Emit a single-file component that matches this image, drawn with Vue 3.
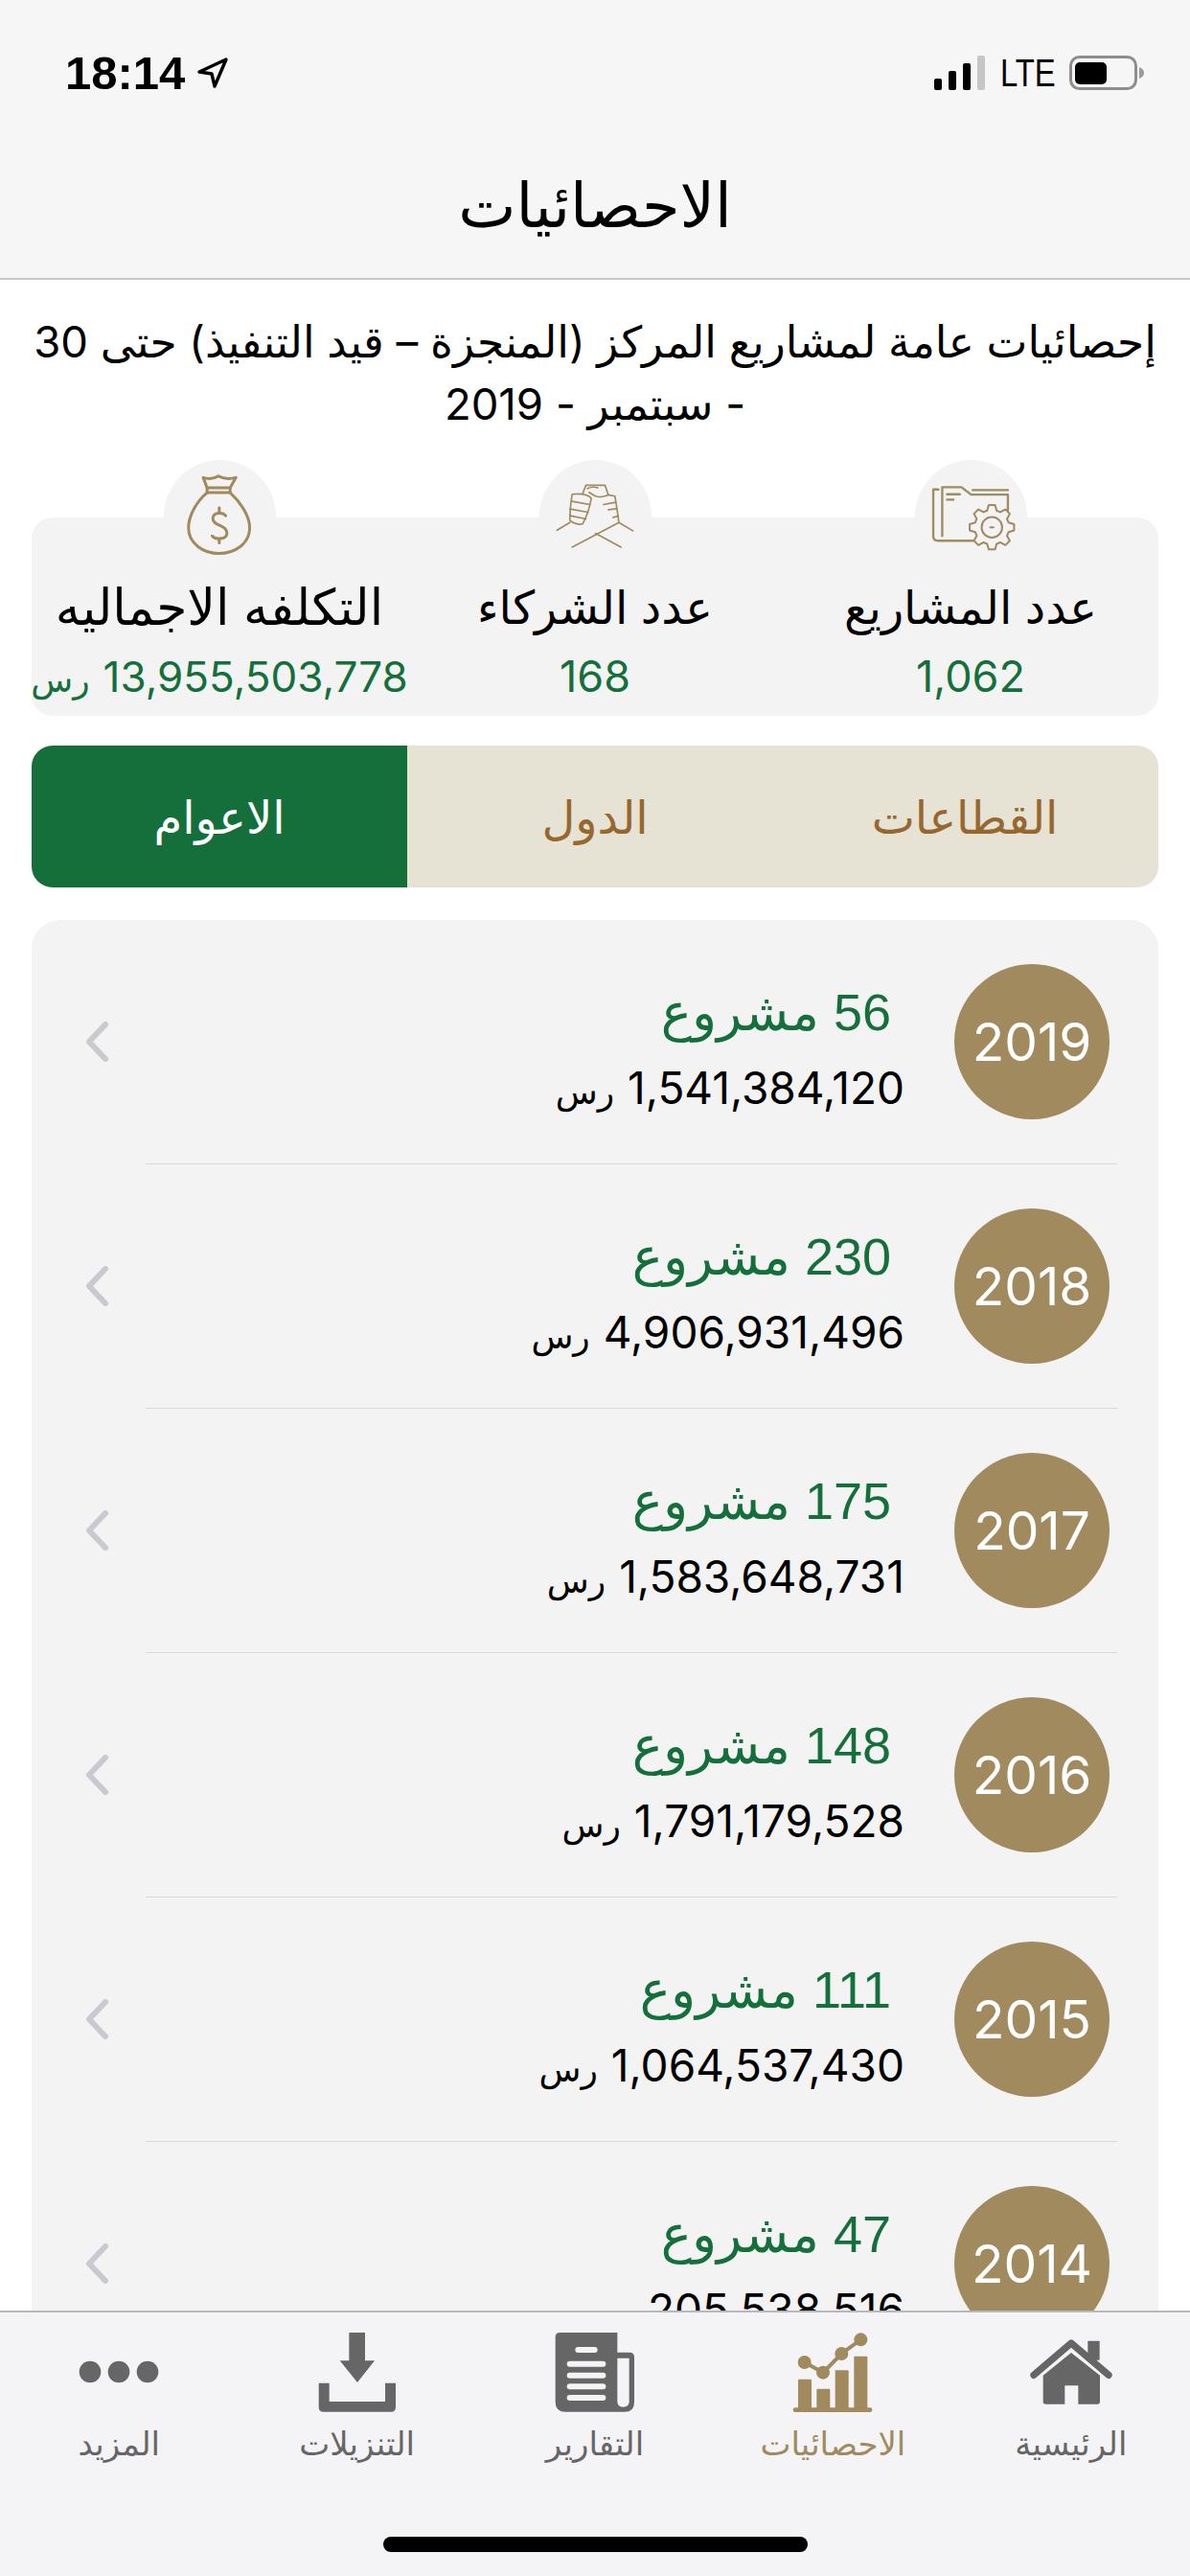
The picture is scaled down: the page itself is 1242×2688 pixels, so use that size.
<script setup>
const gearPath = (() => {
  const cx = 405, cy = 243, teeth = 8, ro = 70, ri = 54
  let d = ''
  for (let i = 0; i < teeth; i++) {
    const a = (i * 2 * Math.PI) / teeth - Math.PI / 2
    const w = 0.2
    const step = Math.PI / teeth
    const pts = [
      [ri, a - step + 0.08],
      [ri, a - w - 0.08],
      [ro, a - w + 0.06],
      [ro, a + w - 0.06],
      [ri, a + w + 0.08]
    ]
    pts.forEach(([r, t], j) => {
      const x = (cx + r * Math.cos(t)).toFixed(1)
      const y = (cy + r * Math.sin(t)).toFixed(1)
      d += `${i === 0 && j === 0 ? 'M' : 'L'}${x},${y} `
    })
  }
  return d + 'Z'
})()

const stats = [
  { key: 'projects', label: 'عدد المشاريع', value: '1,062', box: '165 33 350 350' },
  { key: 'partners', label: 'عدد الشركاء', value: '168', box: '70 33 350 350' },
  { key: 'cost', label: 'التكلفه الاجماليه', value: '13,955,503,778', unit: 'رس', box: '65 33 350 350' }
]

const segments = [
  { label: 'القطاعات', active: false },
  { label: 'الدول', active: false },
  { label: 'الاعوام', active: true }
]

const years = [
  { year: 2019, count: '56 مشروع', total: '1,541,384,120' },
  { year: 2018, count: '230 مشروع', total: '4,906,931,496' },
  { year: 2017, count: '175 مشروع', total: '1,583,648,731' },
  { year: 2016, count: '148 مشروع', total: '1,791,179,528' },
  { year: 2015, count: '111 مشروع', total: '1,064,537,430' },
  { year: 2014, count: '47 مشروع', total: '205,538,516' }
]

const tabs = [
  { key: 'home', label: 'الرئيسية', box: '866 60 288 270' },
  { key: 'stats', label: 'الاحصائيات', box: '124 60 288 270', active: true },
  { key: 'reports', label: 'التقارير', box: '846 60 288 270' },
  { key: 'downloads', label: 'التنزيلات', box: '104 60 288 270' },
  { key: 'more', label: 'المزيد', box: '-144 60 288 270' }
]
</script>

<template>
  <div class="phone">
    <header class="top">
      <div class="status">
        <div class="status-left">
          <span class="clock">18:14</span>
          <svg class="arrow" viewBox="0 0 34 34">
            <path d="M31 3 L3 16 L16 18 L19 31 Z" fill="none" stroke="#000" stroke-width="3.4" stroke-linejoin="round" />
          </svg>
        </div>
        <div class="status-right">
          <svg class="signal" viewBox="0 0 55 36">
            <rect x="0" y="24" width="8" height="12" rx="2" fill="#000" />
            <rect x="15" y="16" width="8" height="20" rx="2" fill="#000" />
            <rect x="30" y="8" width="8" height="28" rx="2" fill="#000" />
            <rect x="45" y="0" width="8" height="36" rx="2" fill="#c6c6c6" />
          </svg>
          <span class="lte">LTE</span>
          <svg class="battery" viewBox="0 0 78 36">
            <rect x="1.5" y="1.5" width="68" height="33" rx="9" fill="none" stroke="#8e8e8e" stroke-width="3" />
            <rect x="6" y="7" width="33" height="23" rx="5" fill="#000" />
            <path d="M73 12 Q78 14 78 18 Q78 22 73 24 Z" fill="#9a9a9a" />
          </svg>
        </div>
      </div>
      <h1 class="title">الاحصائيات</h1>
    </header>

    <main class="content">
      <p class="intro">إحصائيات عامة لمشاريع المركز (المنجزة – قيد التنفيذ) حتى 30 - سبتمبر - 2019</p>

      <section class="stats">
        <div v-for="s in stats" :key="s.key" class="stat" :class="'stat-' + s.key">
          <div class="bump">
            <svg class="bump-icon" :viewBox="s.box" fill="none" stroke="#a08a5e" stroke-linecap="round" stroke-linejoin="round">
              <g v-if="s.key === 'projects'" stroke-width="7">
                <path d="M238,125 H222 V270 Q222,285 237,285 H345" />
                <path d="M250,270 V118 H310 L340,141 H455 V190" />
                <path d="M345,127 H455" />
                <path d="M265,140 H305 M265,157 H285" />
                <path :d="gearPath" stroke-width="6" />
                <circle cx="405" cy="243" r="32" stroke-width="6" />
                <path d="M400,243 H410" stroke-width="6" />
              </g>
              <g v-else-if="s.key === 'partners'" stroke-width="5">
                <path d="M172,140 Q165,185 165,222 Q185,238 205,232 Q225,195 232,152 Q215,135 172,140 Z" />
                <path d="M172,162 L227,172 M165,186 L222,196 M166,207 L215,217" />
                <path d="M205,138 L215,112 H275 L285,142 Q262,152 245,146 L225,134" />
                <path d="M220,122 Q235,114 252,120" />
                <path d="M285,142 L306,146 L312,185 L318,228" />
                <path d="M270,172 L308,165 M285,188 L312,185 M300,212 L316,208" />
                <path d="M165,228 L125,252 M318,228 L362,254 M318,228 L172,305 M245,262 L325,305" />
              </g>
              <g v-else stroke-width="9">
                <path d="M188,88 Q215,96 235,83 Q258,96 290,88 L272,120 H200 Z" />
                <path d="M200,120 V135 H272 V120" />
                <path d="M200,135 C170,160 142,205 142,245 C142,295 190,325 237,325 C285,325 333,295 333,245 C333,205 300,160 272,135" />
                <path d="M258,207 C250,195 218,195 218,216 C218,240 262,234 262,262 C262,282 225,282 216,270" />
                <path d="M238,182 V196 M238,280 V292" />
              </g>
            </svg>
          </div>
          <div class="stat-label">{{ s.label }}</div>
          <div class="stat-value">
            <span>{{ s.value }}</span>
            <span v-if="s.unit" class="cur">{{ s.unit }}</span>
          </div>
        </div>
      </section>

      <nav class="segments">
        <div v-for="seg in segments" :key="seg.label" class="segment" :class="{ on: seg.active }">{{ seg.label }}</div>
      </nav>

      <section class="years">
        <article v-for="y in years" :key="y.year" class="year-row">
          <div class="year-body">
            <div class="year-badge">{{ y.year }}</div>
            <div class="year-text">
              <div class="year-count">{{ y.count }}</div>
              <div class="year-total">
                <span>{{ y.total }}</span>
                <span class="cur">رس</span>
              </div>
            </div>
            <svg class="chev" viewBox="0 0 26 42">
              <path d="M22 3 L5 21 L22 39" fill="none" stroke="#c9c9cf" stroke-width="6" stroke-linecap="round" stroke-linejoin="round" />
            </svg>
          </div>
          <div class="rule"></div>
        </article>
      </section>
    </main>

    <footer class="tabbar">
      <div class="tabs">
        <div v-for="t in tabs" :key="t.key" class="tab" :class="{ on: t.active }">
          <svg class="tab-icon" :viewBox="t.box">
            <g v-if="t.key === 'home'" fill="#666">
              <rect x="1062" y="98" width="37" height="60" rx="2" />
              <path d="M893,205 L1010,105 L1127,205" fill="none" stroke="#666" stroke-width="22" stroke-linecap="round" stroke-linejoin="round" />
              <path d="M922,206 L1010,135 L1100,206 V288 Q1100,296 1092,296 H1032 V238 H990 V296 H930 Q922,296 922,288 Z" />
            </g>
            <g v-else-if="t.key === 'stats'" fill="#a08a5e">
              <rect x="160" y="218" width="42" height="95" rx="3" />
              <rect x="218" y="248" width="42" height="65" rx="3" />
              <rect x="276" y="190" width="42" height="123" rx="3" />
              <rect x="335" y="146" width="42" height="167" rx="3" />
              <rect x="144" y="307" width="248" height="14" rx="7" />
              <path d="M180,165 L238,197 L296,138 L355,95" fill="none" stroke="#a08a5e" stroke-width="12" />
              <circle cx="180" cy="165" r="21" />
              <circle cx="238" cy="197" r="21" />
              <circle cx="296" cy="138" r="21" />
              <circle cx="356" cy="94" r="21" />
            </g>
            <g v-else-if="t.key === 'reports'">
              <path d="M880,72 H1060 V134 H1098 Q1113,134 1113,149 V290 Q1113,320 1083,320 H898 Q866,320 866,290 V86 Q866,72 880,72 Z" fill="#666" />
              <path d="M1060,152 H1097 V288 Q1097,305 1078,305 Q1060,305 1060,288 Z" fill="#f4f4f6" />
              <g fill="#f4f4f6">
                <rect x="928" y="117" width="70" height="18" rx="9" />
                <rect x="902" y="161" width="122" height="18" rx="9" />
                <rect x="902" y="197" width="122" height="18" rx="9" />
                <rect x="902" y="232" width="122" height="18" rx="9" />
                <rect x="902" y="267" width="122" height="18" rx="9" />
              </g>
            </g>
            <g v-else-if="t.key === 'downloads'" fill="#666">
              <rect x="222" y="72" width="50" height="90" />
              <path d="M193,160 H302 L248,228 Z" />
              <path d="M127,230 H160 V288 H335 V230 H368 V305 Q368,320 353,320 H142 Q127,320 127,305 Z" />
            </g>
            <g v-else fill="#666">
              <circle cx="-90" cy="195" r="34" />
              <circle cx="0" cy="195" r="34" />
              <circle cx="90" cy="195" r="34" />
            </g>
          </svg>
          <span class="tab-label">{{ t.label }}</span>
        </div>
      </div>
      <div class="home-bar"></div>
    </footer>
  </div>
</template>

<style scoped>
.phone {
  width: 1242px;
  height: 2688px;
  display: flex;
  flex-direction: column;
  overflow: hidden;
  background: #fff;
  direction: rtl;
  font-family: "Inter", "DejaVu Sans", sans-serif;
  color: #000;
}
.top {
  height: 292px;
  box-sizing: border-box;
  flex: none;
  background: #f6f6f6;
  border-bottom: 2px solid #c8c8c8;
  display: flex;
  flex-direction: column;
}
.status {
  direction: ltr;
  display: flex;
  justify-content: space-between;
  align-items: center;
  padding: 54px 48px 0 68px;
  height: 44px;
}
.status-left,
.status-right {
  display: flex;
  align-items: center;
}
.clock {
  font-family: "Liberation Sans", sans-serif;
  font-size: 49px;
  font-weight: 700;
  line-height: 44px;
}
.arrow {
  width: 34px;
  height: 34px;
  margin-left: 12px;
}
.signal {
  width: 55px;
  height: 36px;
}
.lte {
  font-family: "Liberation Sans", sans-serif;
  font-size: 41px;
  line-height: 44px;
  width: 56px;
  margin: 0 16px 0 14px;
  transform: scaleX(0.8);
  transform-origin: left center;
}
.battery {
  width: 78px;
  height: 36px;
}
.title {
  margin: 0;
  padding-top: 71px;
  text-align: center;
  font-size: 64px;
  line-height: 90px;
  font-weight: 400;
}
.content {
  flex: 1;
  min-height: 0;
  overflow: hidden;
  padding: 0 33px;
}
.intro {
  margin: 32px -14px 86px;
  text-align: center;
  font-size: 45.5px;
  line-height: 65px;
}
.stats {
  display: flex;
  height: 207px;
  background: #f3f3f4;
  border-radius: 22px;
}
.stat {
  flex: 1 1 0;
  min-width: 0;
  display: flex;
  flex-direction: column;
  align-items: center;
}
.bump {
  width: 117px;
  height: 117px;
  margin-top: -60px;
  border-radius: 50%;
  background: #f3f3f4;
  flex: none;
}
.bump-icon {
  display: block;
  width: 117px;
  height: 117px;
}
.stat-label {
  font-size: 48px;
  line-height: 60px;
  margin-top: 7px;
  white-space: nowrap;
}
.stat-cost .stat-label {
  font-size: 52px;
}
.stat-value {
  font-size: 45px;
  line-height: 60px;
  margin-top: 12px;
  color: #156f3b;
  white-space: nowrap;
}
.stat-cost .stat-value {
  font-size: 44px;
}
.cur {
  font-size: 36px;
  margin-right: 14px;
}
.segments {
  display: flex;
  height: 148px;
  margin-top: 31px;
  background: #e6e2d4;
  border-radius: 22px;
  overflow: hidden;
}
.segment {
  flex: 0 0 392px;
  box-sizing: border-box;
  display: flex;
  align-items: center;
  justify-content: center;
  font-size: 48px;
  color: #96682f;
}
.segment:first-child {
  padding-right: 12px;
}
.segment.on {
  background: #156f3b;
  color: #fff;
}
.years {
  margin-top: 34px;
  background: #f3f3f4;
  border-radius: 30px 30px 0 0;
}
.year-row {
  display: flex;
  flex-direction: column;
}
.year-body {
  height: 254px;
  display: flex;
  align-items: center;
  padding: 0 51px 0 55px;
}
.year-badge {
  width: 162px;
  height: 162px;
  border-radius: 50%;
  background: #a08a5e;
  color: #fff;
  font-size: 55px;
  display: flex;
  align-items: center;
  justify-content: center;
  flex: none;
}
.year-text {
  flex: 1;
  margin-right: 52px;
  padding-top: 16px;
}
.year-count {
  font-family: "Liberation Sans", "DejaVu Sans", sans-serif;
  font-size: 54px;
  line-height: 70px;
  color: #156f3b;
  padding-right: 14px;
}
.year-total {
  font-size: 46px;
  line-height: 60px;
  margin-top: 14px;
}
.chev {
  width: 26px;
  height: 42px;
  flex: none;
}
.rule {
  height: 1px;
  background: #d9d9dd;
  margin: 0 43px 0 119px;
}
.tabbar {
  flex: none;
  height: 277px;
  box-sizing: border-box;
  background: #f4f4f6;
  border-top: 2px solid #b8b8bc;
  display: flex;
  flex-direction: column;
  align-items: center;
}
.tabs {
  width: 100%;
  display: flex;
  padding-top: 17px;
}
.tab {
  flex: 1 1 0;
  display: flex;
  flex-direction: column;
  align-items: center;
  color: #666;
}
.tab.on {
  color: #a08a5e;
}
.tab-icon {
  width: 96px;
  height: 90px;
  display: block;
}
.tab-label {
  font-size: 34px;
  line-height: 44px;
  margin-top: 8px;
  white-space: nowrap;
}
.home-bar {
  width: 443px;
  height: 16px;
  border-radius: 8px;
  background: #000;
  margin-top: 75px;
}
</style>
